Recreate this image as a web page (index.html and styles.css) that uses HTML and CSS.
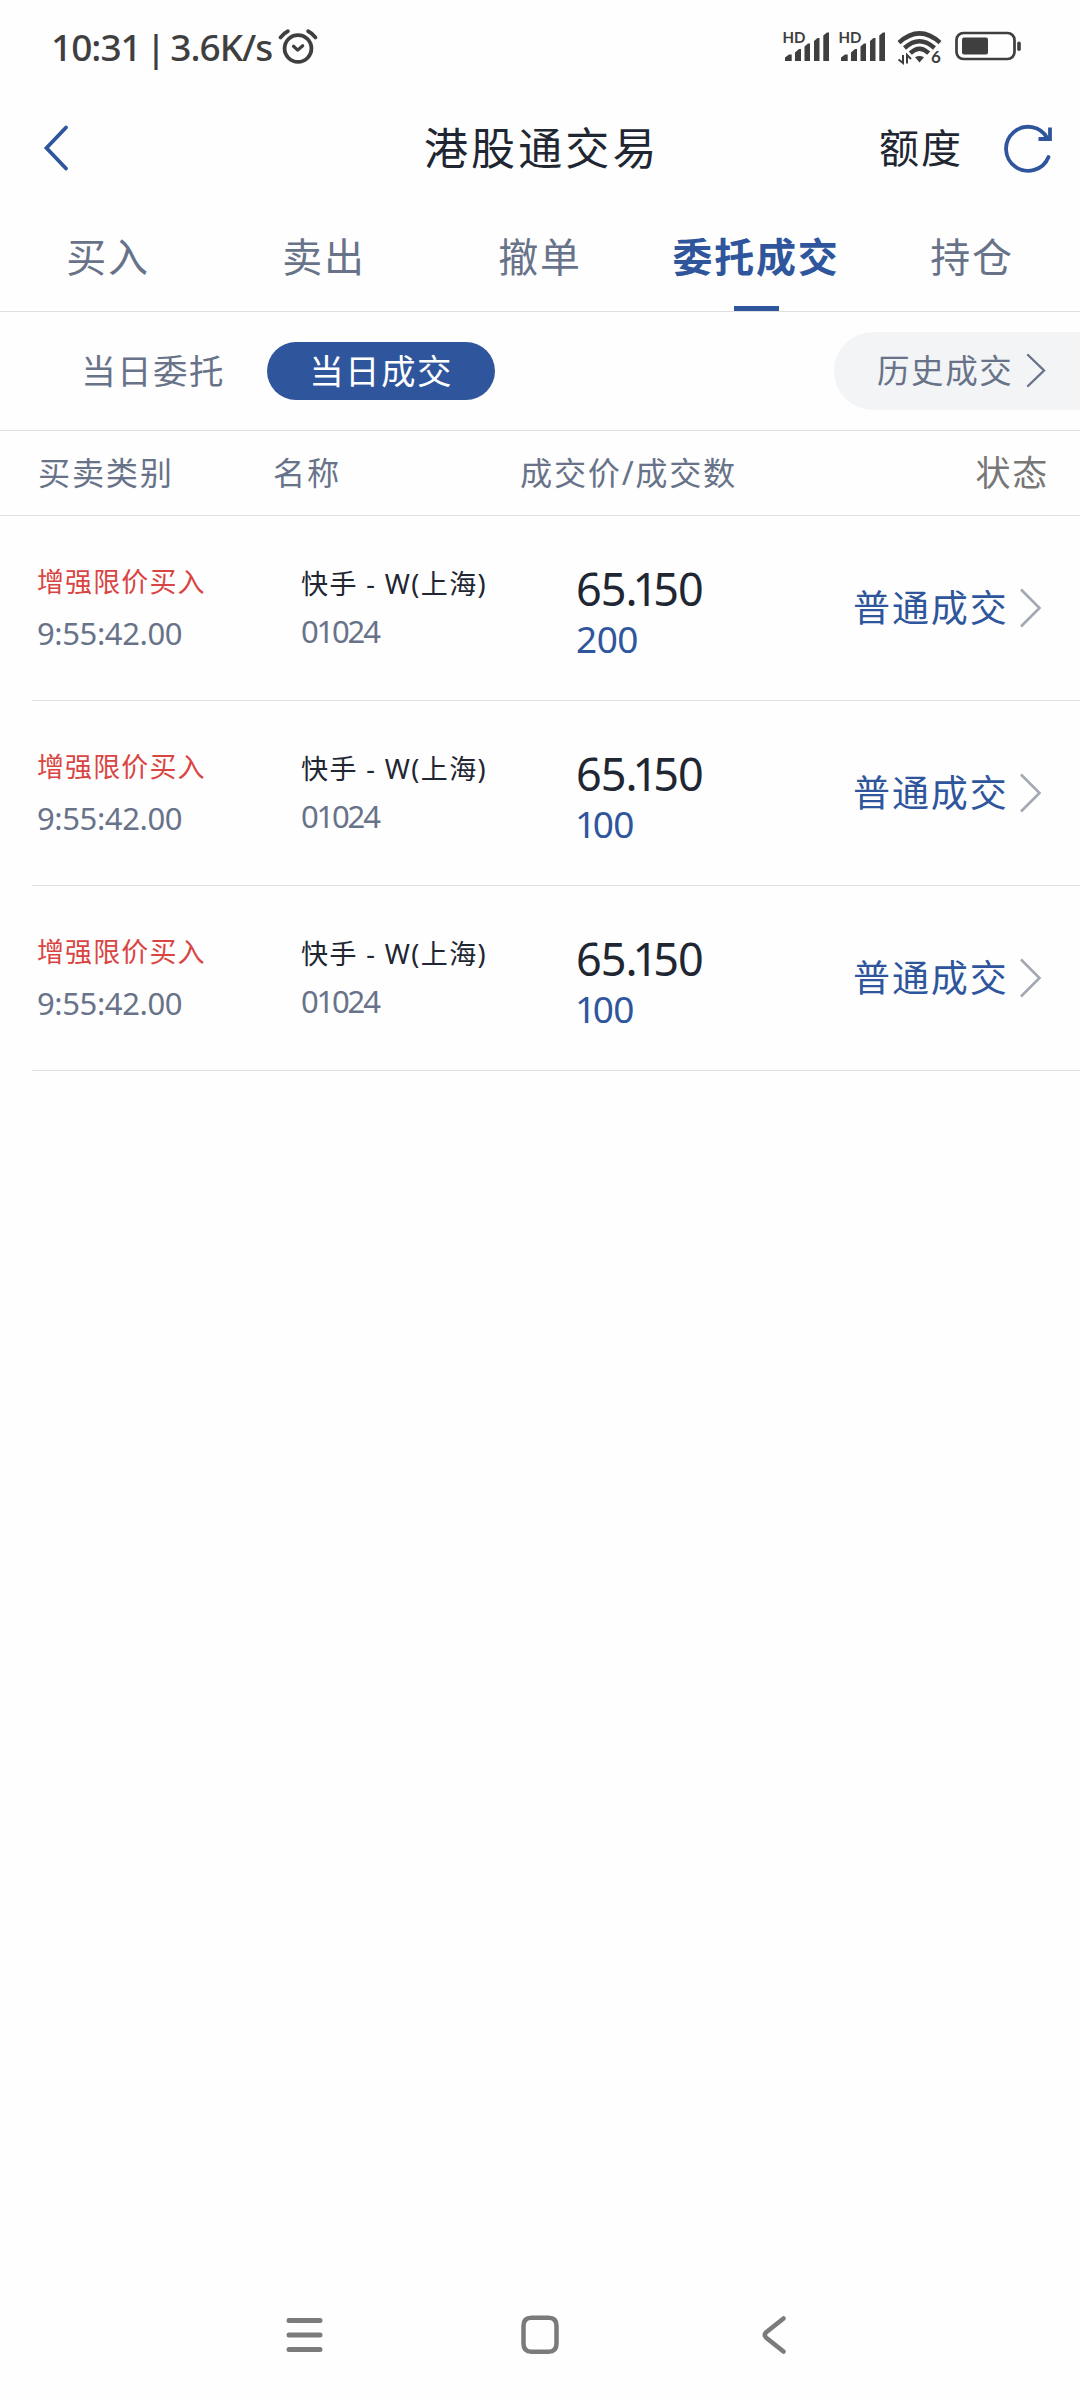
FILE: index.html
```html
<!DOCTYPE html>
<html lang="zh-CN">
<head>
  <meta charset="UTF-8" />
  <meta name="viewport" content="width=device-width, initial-scale=1.0"/>
  <title>港股通交易</title>
  <link rel="stylesheet" href="styles.css">
</head>
<body>
  <!-- Status bar -->
  <div class="status-bar">
    <span class="status-time">10:31 | 3.6K/s</span>
    <svg class="alarm" width="40" height="38" viewBox="0 0 40 38" fill="none" stroke="#3f3f3f" stroke-linecap="round">
      <circle cx="20" cy="20.5" r="13.4" stroke-width="3.8"/>
      <path d="M15.5 18.3l4.2 3.8 5-4.4" stroke-width="3.2" stroke-linejoin="round"/>
      <path d="M2.6 9.4Q5.6 5.3 9.800 3.200M37.400 9.400Q34.400 5.300 30.200 3.200" stroke-width="3.800"/>
    </svg>
    <div class="status-icons">
      <svg width="56" height="46" viewBox="0 -6 56 46" fill="#3f3f3f">
        <text class="hd" x="-.5" y="13">HD</text>
        <path d="M2 31v-3.500l4-3h2.700v6.500zM12 31v-8.500l4-3.500h2v12zM21.500 31v-14.500l3.500-3h2v17.500zM31 31v-20l3.500-3h2v23zM40.300 31v-25.500l3.700-3h2v28.500z"/>
      </svg>
      <svg width="56" height="46" viewBox="0 -6 56 46" fill="#3f3f3f">
        <text class="hd" x="-.5" y="13">HD</text>
        <path d="M2 31v-3.500l4-3h2.700v6.500zM12 31v-8.500l4-3.500h2v12zM21.500 31v-14.500l3.500-3h2v17.500zM31 31v-20l3.500-3h2v23zM40.300 31v-25.500l3.700-3h2v28.500z"/>
      </svg>
      <svg width="60" height="46" viewBox="0 -6 60 46" fill="none" stroke="#3f3f3f" stroke-width="4.400">
        <path d="M4 12.600Q24.500 -5.800 45 12.600M9.500 18Q24.500 4.400 39.500 18M15.300 23.200Q24.500 14.400 33.700 23.200"/>
        <path d="M20 27.200Q24.500 24.600 29 27.200L24.500 32.500z" fill="#3f3f3f" stroke="none"/>
        <path d="M3.500 29.500L8 33V25M12 33.500V25l4 4" stroke-width="2"/>
        <text class="six" x="36" y="33">6</text>
      </svg>
      <svg width="68" height="46" viewBox="0 -6 68 46">
        <rect x="1.500" y="3" width="58" height="26" rx="7" fill="none" stroke="#3f3f3f" stroke-width="2.700"/>
        <rect x="7" y="7.500" width="26" height="17" rx="2" fill="#3f3f3f"/>
        <rect x="62.200" y="11.500" width="3.600" height="9.500" rx="1.800" fill="#3f3f3f"/>
      </svg>
    </div>
  </div>

  <!-- Title bar -->
  <header class="header">
    <svg class="back" width="30" height="50" viewBox="0 0 30 50" fill="none" stroke="#2f569c" stroke-width="3.800" stroke-linecap="round">
      <path d="M24 4.500L4.500 25l19.500 20.500"/>
    </svg>
    <h1 class="title">港股通交易</h1>
    <span class="quota">额度</span>
    <svg class="refresh" width="50" height="50" viewBox="0 0 50 50" fill="none" stroke="#2f569c" stroke-width="3.800">
      <path d="M45.500 34A22 22 0 1 1 44.500 15.500" stroke-linecap="round"/>
      <path d="M47 4.500V16H35.500"/>
    </svg>
  </header>

  <nav class="tabs">
    <a class="tab">买入</a>
    <a class="tab">卖出</a>
    <a class="tab">撤单</a>
    <a class="tab active">委托成交</a>
    <a class="tab">持仓</a>
  </nav>

  <div class="sub-tabs">
    <a class="sub-tab">当日委托</a>
    <a class="sub-tab active">当日成交</a>
    <a class="history"><span>历史成交</span>
      <svg width="22" height="36" viewBox="0 0 22 36" fill="none" stroke="#687389" stroke-width="2.400" stroke-linecap="round"><path d="M3 2l16 15.500L3 33"/></svg>
    </a>
  </div>

  <div class="table-head">
    <span>买卖类别</span>
    <span>名称</span>
    <span>成交价/成交数</span>
    <span class="state">状态</span>
  </div>

  <!-- Deals -->
  <div class="list">
    <div class="row">
      <div><p class="type">增强限价买入</p><p class="time">9:55:42.00</p></div>
      <div><p class="name">快手 - W(上海)</p><p class="code">01024</p></div>
      <div><p class="price">65.<span class="one">1</span>50</p><p class="count">200</p></div>
      <div class="result"><span>普通成交</span>
        <svg width="22" height="40" viewBox="0 0 22 40" fill="none" stroke="#a3a8b3" stroke-width="2.600"><path d="M1 1.500L19.500 20 1 38.500"/></svg>
      </div>
    </div>
    <div class="row">
      <div><p class="type">增强限价买入</p><p class="time">9:55:42.00</p></div>
      <div><p class="name">快手 - W(上海)</p><p class="code">01024</p></div>
      <div><p class="price">65.<span class="one">1</span>50</p><p class="count"><span class="lead">1</span>00</p></div>
      <div class="result"><span>普通成交</span>
        <svg width="22" height="40" viewBox="0 0 22 40" fill="none" stroke="#a3a8b3" stroke-width="2.600"><path d="M1 1.500L19.500 20 1 38.500"/></svg>
      </div>
    </div>
    <div class="row">
      <div><p class="type">增强限价买入</p><p class="time">9:55:42.00</p></div>
      <div><p class="name">快手 - W(上海)</p><p class="code">01024</p></div>
      <div><p class="price">65.<span class="one">1</span>50</p><p class="count"><span class="lead">1</span>00</p></div>
      <div class="result"><span>普通成交</span>
        <svg width="22" height="40" viewBox="0 0 22 40" fill="none" stroke="#a3a8b3" stroke-width="2.600"><path d="M1 1.500L19.500 20 1 38.500"/></svg>
      </div>
    </div>
  </div>

  <!-- System navigation -->
  <div class="nav-bar">
    <svg width="44" height="44" viewBox="0 0 44 44" fill="none" stroke="#7b7b7b" stroke-width="5" stroke-linecap="round">
      <path d="M6 7.500h31M6 22h31M6 36.600h31"/>
    </svg>
    <svg width="44" height="44" viewBox="0 0 44 44" fill="none" stroke="#7b7b7b" stroke-width="4.500">
      <path d="M13.500 4.700h17q8 0 8 8v18q0 8-8 8h-17q-8 0-8-8v-18q0-8 8-8z"/>
    </svg>
    <svg width="44" height="44" viewBox="0 0 44 44" fill="none" stroke="#7b7b7b" stroke-width="4.600" stroke-linecap="round">
      <path d="M30.500 5.500L13.500 19q-3.500 3 0 6l17 13.500"/>
    </svg>
  </div>
</body>
</html>
```
FILE: styles.css
```css
body {
  margin: 0;
  width: 1080px;
  height: 2400px;
  display: flex;
  flex-direction: column;
  background: #fefefe;
  color: #687389;
  font-family: "Noto Sans", "Noto Sans CJK SC", sans-serif;
}

svg {
  display: block;
  flex: none;
}

p, h1 {
  margin: 0;
  font-weight: 400;
}

.status-bar {
  height: 94px;
  display: flex;
  align-items: center;
  box-sizing: border-box;
  padding: 0 57px 0 51px;
  color: #3f3f3f;
}

.status-time {
  width: 227px;
  font-size: 37px;
  line-height: 92px;
  font-weight: 500;
  letter-spacing: -1px;
  word-spacing: -3.500px;
  white-space: nowrap;
}

.status-icons {
  display: flex;
  margin-left: auto;
}

.hd {
  font: bold 15px Lato, sans-serif;
}

.six {
  font: bold 17px Lato, sans-serif;
  fill: #3f3f3f;
  stroke: none;
}

.header {
  height: 108px;
  display: grid;
  grid-template-columns: 382px 1fr 124px 50px;
  align-items: center;
  padding: 0 27px 0 42px;
  color: #202632;
}

.title {
  font-size: 44px;
  line-height: 60px;
  letter-spacing: 3.1px;
}

.quota {
  font-size: 40px;
  line-height: 56px;
  letter-spacing: 2px;
}

.tabs {
  height: 109px;
  display: grid;
  grid-template-columns: repeat(5, 1fr);
  border-bottom: 1px solid #dfdfdf;
}

.tab {
  display: flex;
  flex-direction: column;
  align-items: center;
  font-size: 40px;
  line-height: 110px;
  letter-spacing: 1.8px;
}

.tab.active {
  color: #2f569c;
  font-weight: 700;
}

.tab.active::after {
  content: "";
  width: 45px;
  height: 5px;
  margin-top: -6px;
  background: #2f569c;
}

.sub-tabs {
  height: 118px;
  display: flex;
  align-items: center;
  border-bottom: 1px solid #dfdfdf;
}

.sub-tab {
  width: 228px;
  margin-left: 39px;
  text-align: center;
  font-size: 34.500px;
  line-height: 58px;
  letter-spacing: 1.4px;
}

.sub-tab.active {
  margin-left: 0;
  border-radius: 29px;
  background: #2f569c;
  color: #fff;
}

.history {
  height: 78px;
  width: 203px;
  margin-left: auto;
  padding-left: 43px;
  display: flex;
  align-items: center;
  gap: 12px;
  border-radius: 39px 0 0 39px;
  background: #f3f4f6;
  font-size: 32.500px;
  line-height: 78px;
  letter-spacing: 1.6px;
}

.table-head {
  height: 84px;
  display: grid;
  grid-template-columns: 235px 247px 1fr auto;
  align-items: center;
  padding: 0 31px 0 38px;
  border-bottom: 1px solid #dfdfdf;
  font-size: 32.200px;
  line-height: 84px;
  letter-spacing: 1.7px;
}

.state {
  font-size: 35px;
  color: #777;
}

.list {
  flex: 1;
  padding-left: 32px;
}

.row {
  height: 184px;
  display: grid;
  grid-template-columns: 264px 275px 277px 1fr;
  padding-left: 5px;
  border-bottom: 1px solid #dfdfdf;
}

.type, .name {
  padding-top: 46px;
  font-size: 27px;
  line-height: 40px;
  letter-spacing: 1.1px;
  white-space: nowrap;
}

.type {
  color: #d94543;
}

.name {
  padding-top: 48px;
  letter-spacing: 1.4px;
  color: #202632;
}

.time, .code {
  padding-top: 11px;
  font-size: 31px;
  line-height: 40px;
  letter-spacing: -0.4px;
}

.code {
  padding-top: 7px;
  letter-spacing: -2.2px;
}

.price {
  padding-top: 46px;
  font-size: 45px;
  line-height: 54px;
  letter-spacing: -1px;
  color: #202632;
}

.one {
  margin: 0 -4px;
}

.count {
  margin-top: -1px;
  font-size: 37px;
  line-height: 48px;
  letter-spacing: -0.5px;
  color: #2f569c;
}

/* narrow leading digit */
.lead {
  margin: 0 -3px 0 -1px;
}

.result {
  display: flex;
  align-items: center;
  gap: 11px;
  font-size: 37px;
  line-height: 180px;
  letter-spacing: 1.9px;
  color: #2f569c;
}

.nav-bar {
  height: 131px;
  display: flex;
  justify-content: center;
  align-items: center;
  gap: 191px;
}
```
